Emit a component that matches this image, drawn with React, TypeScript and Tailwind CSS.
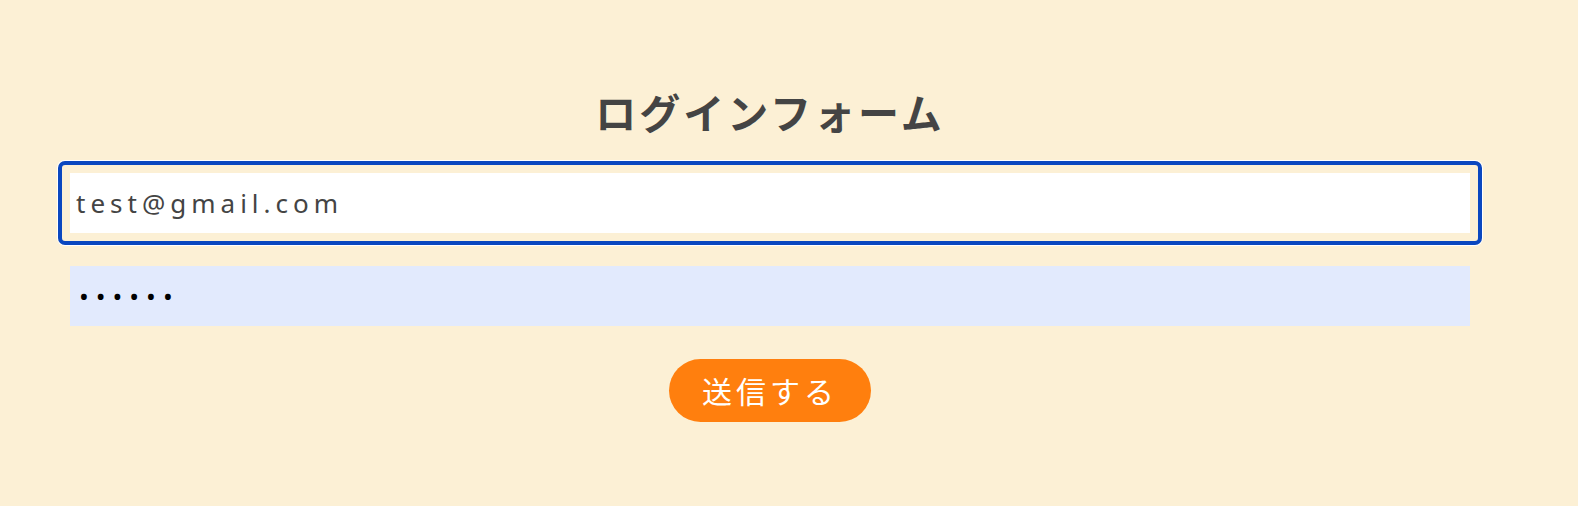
import { useState } from "react";

export default function App() {
  const [email, setEmail] = useState("test@gmail.com");
  const [password, setPassword] = useState("123456");

  return (
    <div className="min-h-screen w-full bg-[#fcf0d5] font-['Noto_Sans','Noto_Sans_CJK_JP',sans-serif]">
      <form
        className="ml-[70px] flex w-[1400px] flex-col pt-[86px]"
        onSubmit={(e) => e.preventDefault()}
      >
        {/* Title */}
        <h1 className="text-center font-['Noto_Sans_CJK_JP',sans-serif] text-[41px] font-bold leading-[50px] tracking-[3px] text-[#444444]">
          ログインフォーム
        </h1>

        {/* Email (shown focused) */}
        <div className="relative mt-[37px]">
          <input
            type="email"
            value={email}
            onChange={(e) => setEmail(e.target.value)}
            className="block h-[60px] w-full bg-white pl-[6px] text-[26px] tracking-[5px] text-[#444444] outline-none"
          />
          <span className="pointer-events-none absolute -inset-[12px] rounded-[7px] border-4 border-[#0a47c0] shadow-[0_0_0_1px_#ffffff]" />
        </div>

        {/* Password (autofilled) */}
        <input
          type="password"
          value={password}
          onChange={(e) => setPassword(e.target.value)}
          className="mt-[33px] block h-[60px] w-full bg-[#e2eafd] pl-[9px] text-[26px] tracking-[7px] text-black outline-none"
        />

        {/* Submit */}
        <button
          type="submit"
          className="mx-auto mt-[33px] h-[63px] w-[202px] rounded-full bg-[#ff7f0e] font-['Noto_Sans_CJK_JP',sans-serif] text-[30px] tracking-[4px] text-white"
        >
          送信する
        </button>
      </form>
    </div>
  );
}
